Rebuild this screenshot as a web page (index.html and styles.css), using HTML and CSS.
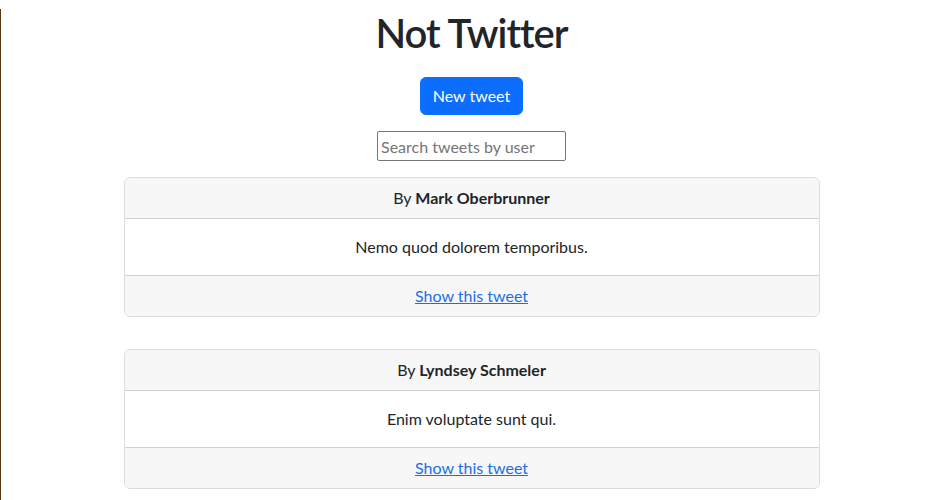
FILE: index.html
```html
<!DOCTYPE html>
<html>
<head>
<meta charset="utf-8">
<link rel="stylesheet" href="styles.css">
</head>
<body>
<div class="page">
  <div class="container">
    <h1 class="title">Not Twitter</h1>
    <div class="actions">
      <a class="btn" href="#">New tweet</a>
    </div>
    <div class="search">
      <input class="search-input" type="text" placeholder="Search tweets by user">
    </div>
    <div class="card">
      <div class="card-header">By <strong>Mark Oberbrunner</strong></div>
      <div class="card-body">Nemo quod dolorem temporibus.</div>
      <div class="card-footer"><a href="#">Show this tweet</a></div>
    </div>
    <div class="card">
      <div class="card-header">By <strong>Lyndsey Schmeler</strong></div>
      <div class="card-body">Enim voluptate sunt qui.</div>
      <div class="card-footer"><a href="#">Show this tweet</a></div>
    </div>
  </div>
</div>
</body>
</html>
```

FILE: styles.css
```css
html, body {
  margin: 0;
  padding: 0;
  background: #fff;
}
body {
  font-family: Lato, "Open Sans", sans-serif;
  font-size: 16px;
  line-height: 1.5;
  color: #212529;
}
.page {
  border-left: 1px solid #5a3817;
  min-height: 500px;
  box-sizing: border-box;
}
.container {
  width: 696px;
  margin: 0 auto;
  text-align: center;
}
.title {
  font-size: 40px;
  font-weight: 600;
  line-height: 1.2;
  letter-spacing: -1px;
  margin: 9px 0 20px;
}
.actions {
  margin-bottom: 16px;
}
.btn {
  display: inline-block;
  background: #0d6efd;
  color: #fff;
  text-decoration: none;
  padding: 6px 12px;
  border-radius: 6px;
  border: 1px solid #0d6efd;
  line-height: 24px;
}
.search {
  margin-bottom: 16px;
  line-height: 0;
}
.search-input {
  width: 189px;
  height: 30px;
  box-sizing: border-box;
  font-family: inherit;
  font-size: 16px;
  border: 1px solid #767676;
  border-radius: 2px;
  padding: 1px 3px;
  color: #212529;
}
.search-input::placeholder {
  color: #757575;
}
.card {
  border: 1px solid #dcdcdc;
  border-radius: 6px;
  overflow: hidden;
  margin-bottom: 32px;
}
.card-header, .card-footer {
  background: #f7f7f7;
  padding: 8px 16px;
}
.card-header {
  border-bottom: 1px solid #d2d2d2;
}
.card-footer {
  border-top: 1px solid #d2d2d2;
}
.card-body {
  padding: 16px;
}
.card-footer a {
  color: #1a6fe6;
}
strong {
  font-weight: 700;
}
```
